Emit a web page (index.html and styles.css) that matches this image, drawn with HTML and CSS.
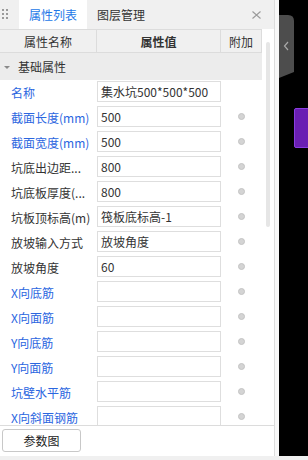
FILE: index.html
```html
<!DOCTYPE html>
<html>
<head>
<meta charset="utf-8">
<link rel="stylesheet" href="styles.css">
</head>
<body>
<div class="page">
  <div class="main">
    <div class="panel">
      <div class="tabs">
        <div class="grip"><i></i><i></i><i></i><i></i><i></i><i></i></div>
        <div class="tab active">属性列表</div>
        <div class="tab">图层管理</div>
        <div class="close">
          <svg width="9" height="8" viewBox="0 0 9 8"><path d="M0.5 0.5 L8.5 7.5 M8.5 0.5 L0.5 7.5" stroke="#9a9a9a" stroke-width="1.1" fill="none"/></svg>
        </div>
      </div>
      <div class="grid-area">
        <div class="table">
          <div class="thead">
            <div class="th c1">属性名称</div>
            <div class="th c2 strong">属性值</div>
            <div class="th c3">附加</div>
          </div>
          <div class="tbody">
            <div class="section"><span class="caret"></span><span class="section-title">基础属性</span></div>
            <div class="row"><div class="label blue">名称</div><div class="val"><div class="input">集水坑500*500*500</div></div><div class="extra"></div></div>
            <div class="row"><div class="label blue">截面长度(mm)</div><div class="val"><div class="input">500</div></div><div class="extra"><span class="radio"></span></div></div>
            <div class="row"><div class="label blue">截面宽度(mm)</div><div class="val"><div class="input">500</div></div><div class="extra"><span class="radio"></span></div></div>
            <div class="row"><div class="label">坑底出边距...</div><div class="val"><div class="input">800</div></div><div class="extra"><span class="radio"></span></div></div>
            <div class="row"><div class="label">坑底板厚度(...</div><div class="val"><div class="input">800</div></div><div class="extra"><span class="radio"></span></div></div>
            <div class="row"><div class="label">坑板顶标高(m)</div><div class="val"><div class="input">筏板底标高-1</div></div><div class="extra"><span class="radio"></span></div></div>
            <div class="row"><div class="label">放坡输入方式</div><div class="val"><div class="input">放坡角度</div></div><div class="extra"><span class="radio"></span></div></div>
            <div class="row"><div class="label">放坡角度</div><div class="val"><div class="input">60</div></div><div class="extra"><span class="radio"></span></div></div>
            <div class="row"><div class="label blue">X向底筋</div><div class="val"><div class="input"></div></div><div class="extra"><span class="radio"></span></div></div>
            <div class="row"><div class="label blue">X向面筋</div><div class="val"><div class="input"></div></div><div class="extra"><span class="radio"></span></div></div>
            <div class="row"><div class="label blue">Y向底筋</div><div class="val"><div class="input"></div></div><div class="extra"><span class="radio"></span></div></div>
            <div class="row"><div class="label blue">Y向面筋</div><div class="val"><div class="input"></div></div><div class="extra"><span class="radio"></span></div></div>
            <div class="row"><div class="label blue">坑壁水平筋</div><div class="val"><div class="input"></div></div><div class="extra"><span class="radio"></span></div></div>
            <div class="row"><div class="label blue">X向斜面钢筋</div><div class="val"><div class="input"></div></div><div class="extra"><span class="radio"></span></div></div>
          </div>
        </div>
        <div class="vscroll"><div class="thumb"></div></div>
      </div>
      <div class="footer"><button class="btn">参数图</button></div>
    </div>
    <div class="strip"></div>
    <div class="side">
      <svg class="handle" width="15" height="63" viewBox="0 0 15 63">
        <path d="M0 0 L9 0 Q15 0 15 6 L15 57 L0 63 Z" fill="#4d4d4d"/>
        <path d="M9 27 L5.5 31 L9 35" stroke="#a8a8a8" stroke-width="1.2" fill="none"/>
      </svg>
      <div class="purple"></div>
    </div>
  </div>
  <div class="bottom"></div>
</div>
</body>
</html>
```
FILE: styles.css
```css
* { box-sizing: border-box; }
html, body { margin: 0; padding: 0; }
body {
  width: 308px;
  height: 460px;
  overflow: hidden;
  font-family: "Noto Sans CJK SC", "Microsoft YaHei", sans-serif;
  font-size: 12px;
  color: #333;
  background: #000;
}
.page { display: flex; flex-direction: column; width: 308px; height: 460px; }
.main { display: flex; height: 456px; }
.bottom { height: 4px; background: #f0f0f0; }

.panel {
  width: 275px;
  height: 456px;
  background: #fff;
  border-right: 1px solid #dcdcdc;
  display: flex;
  flex-direction: column;
}
.strip { width: 4px; background: #f8f8f8; }
.side { flex: 1; background: #000; position: relative; }

/* tabs */
.tabs {
  height: 29px;
  background: #f0f0f0;
  display: flex;
  align-items: stretch;
}
.grip {
  width: 19px;
  display: grid;
  grid-template-columns: 2px 2px;
  grid-template-rows: 2px 2px 2px;
  column-gap: 2px;
  row-gap: 2px;
  align-content: start;
  padding: 9px 0 0 2px;
}
.grip i { display: block; width: 2px; height: 2px; background: #9a9a9a; }
.tab {
  padding: 0 10px;
  line-height: 29px;
  font-size: 12px;
  color: #333;
}
.tab.active { background: #fff; color: #2378e8; }
.close {
  margin-left: auto;
  width: 22px;
  display: flex;
  align-items: center;
  padding: 0 0 0 3px;
  margin-right: 3px;
}
.close svg { display: block; margin-top: 0; }

/* grid */
.grid-area {
  height: 397px;
  display: flex;
  border-bottom: 1px solid #dcdcdc;
}
.table { width: 262px; display: flex; flex-direction: column; overflow: hidden; }
.thead {
  height: 24px;
  display: flex;
  background: #f0f0f0;
  border-top: 1px solid #dcdcdc;
  border-bottom: 1px solid #dcdcdc;
}
.th {
  display: flex;
  align-items: center;
  justify-content: center;
  border-right: 1px solid #dcdcdc;
  color: #333;
}
.th.c1 { width: 97px; }
.th.c2 { width: 124px; }
.th.c3 { width: 41px; }
.th.strong { font-weight: 600; }

.tbody { flex: 1; overflow: hidden; }
.section {
  height: 27px;
  background: #ececec;
  display: flex;
  align-items: center;
}
.caret {
  width: 0; height: 0;
  border-left: 3px solid transparent;
  border-right: 3px solid transparent;
  border-top: 3px solid #8a8a8a;
  margin: 1px 8px 0 4px;
}
.section-title { color: #333; }

.row { height: 25px; display: flex; align-items: flex-start; }
.label {
  width: 97px;
  padding-left: 11px;
  line-height: 25px;
  height: 25px;
  white-space: nowrap;
  overflow: hidden;
  color: #333;
}
.label.blue { color: #2b66df; }
.val { width: 124px; padding-top: 1px; }
.input {
  width: 124px;
  height: 21px;
  border: 1px solid #dedede;
  background: #fff;
  padding-left: 3px;
  line-height: 19px;
  white-space: nowrap;
  overflow: hidden;
  color: #333;
}
.extra {
  width: 41px;
  height: 25px;
  display: flex;
  align-items: center;
  justify-content: center;
  padding-bottom: 2px;
}
.radio {
  width: 7px;
  height: 7px;
  border-radius: 50%;
  background: #d4d4d4;
  border: 1px solid #c4c4c4;
}

.vscroll { width: 12px; padding: 13px 0 0 4px; }
.thumb { width: 4px; height: 185px; background: #e6e6e6; border-radius: 2px; }

/* footer */
.footer { height: 29px; padding: 3px 0 0 2px; background: #fff; }
.btn {
  width: 79px;
  height: 23px;
  background: #fff;
  border: 1px solid #c8c8c8;
  border-radius: 3px;
  font-family: "Noto Sans CJK SC", sans-serif;
  font-size: 12px;
  color: #222;
  padding: 0;
}

/* side overlays */
.handle { position: absolute; left: 0; top: 15px; display: block; }
.purple {
  position: absolute;
  left: 15px;
  top: 108px;
  width: 20px;
  height: 40px;
  background: #6a1fb3;
  border: 1px solid #8a3ee0;
  border-radius: 2px;
}
```
